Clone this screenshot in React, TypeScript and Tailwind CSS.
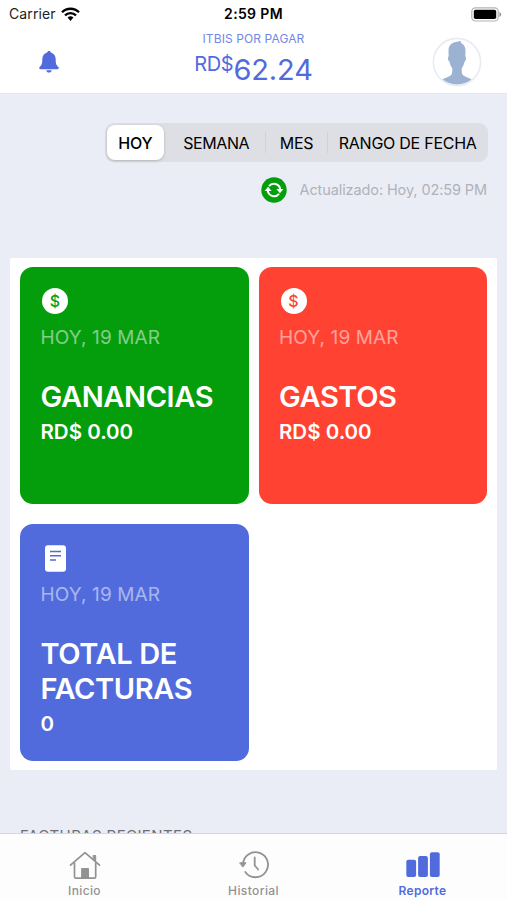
import React from "react";
import clsx from "clsx";

const tabs = [
  { label: "HOY", className: "w-[57px] tracking-[-0.2px]", active: true },
  { label: "SEMANA", className: "w-[101px] pl-1 tracking-[-0.4px]" },
  { label: "MES", className: "w-[63px] pl-px tracking-[-0.3px]", divider: true },
  { label: "RANGO DE FECHA", className: "w-[159px] pl-[2px] tracking-[-0.25px]", divider: true },
];

const cards = [
  { title: "GANANCIAS", value: "RD$ 0.00", color: "bg-[#049d0c]", text: "text-[#049d0c]", icon: "money" },
  { title: "GASTOS", value: "RD$ 0.00", color: "bg-[#ff4232]", text: "text-[#ff4232]", icon: "money" },
  { title: "TOTAL DE FACTURAS", value: "0", color: "bg-[#516bdd]", text: "text-[#516bdd]", icon: "invoice" },
];

const WifiIcon = () => (
  <svg width="19" height="15" viewBox="0 0 19 15" fill="none" stroke="#000" strokeWidth="2.3">
    <path d="M1 5.3a12 12 0 0 1 17 0" />
    <path d="M4 8.4a7.8 7.8 0 0 1 11 0" />
    <path d="M6.6 10.6a4.1 4.1 0 0 1 5.8 0L9.5 13.9z" fill="#000" stroke="none" />
  </svg>
);

const BatteryIcon = () => (
  <svg width="31" height="15" viewBox="0 0 31 15">
    <rect x="0.8" y="0.8" width="26.4" height="13.2" rx="3.6" fill="#fff" stroke="#b3b3b3" strokeWidth="1.2" />
    <rect x="2.8" y="2.8" width="22.4" height="9.2" rx="1.8" fill="#000" />
    <path d="M28.4 5c2.4.8 2.4 4 0 4.8z" fill="#999" />
  </svg>
);

const BellIcon = () => (
  <svg width="20" height="22" viewBox="0 0 20 22" fill="#516bdd">
    <path d="M10 0c-1 0-1.7.6-1.9 1.5C5 2.3 3.3 5 3.3 8.3c0 4.300-.6 5.900-2.500 7.500-1 1-.6 2.400.8 2.400h16.800c1.400 0 1.800-1.400.8-2.400-1.900-1.600-2.500-3.200-2.500-7.500 0-3.300-1.700-6-4.800-6.800C11.700.6 11 0 10 0z" />
    <path d="M7.300 19.200h5.400c-.2 1.500-1.300 2.400-2.700 2.400s-2.500-.9-2.700-2.400z" />
  </svg>
);

const Avatar = () => (
  <svg width="50" height="50" viewBox="0 0 50 50">
    <defs>
      <clipPath id="avatar">
        <circle cx="25" cy="25" r="22.500" />
      </clipPath>
    </defs>
    <circle cx="25" cy="25" r="23.600" fill="#fff" stroke="#e9ebf4" strokeWidth="1.600" />
    <path
      clipPath="url(#avatar)"
      fill="#9cb2d2"
      d="M28.500 4c-1.500.2-3 .9-4.500 1.100-5 .7-7.700 4.200-7.500 9.200l.2 5.200c-1.200.3-.8 4.500.8 5.200.5 2.500 1.300 4.500 2.700 6.300.2 2.500.2 5-.7 6.500C17.500 40.500 11 41 7 44v6h36v-6c-4-3-10.500-3.500-12.500-6.500-.9-1.500-.9-4-.7-6.500 1.400-1.800 2.200-3.800 2.700-6.300 1.600-.7 2-4.900.8-5.200l.2-5.200c.1-3.500-1-6.500-4.200-8z"
    />
  </svg>
);

const RefreshIcon = () => (
  <svg width="26" height="26" viewBox="0 0 26 26">
    <circle cx="13" cy="13" r="12.700" fill="#049d0c" />
    <g fill="none" stroke="#fff" strokeWidth="2">
      <path d="M8 9.200a6.300 6.300 0 0 1 11.200 3.300" />
      <path d="M18 16.800a6.300 6.300 0 0 1-11.200-3.300" />
    </g>
    <path d="M15.400 12h7l-3.500 4.200z" fill="#fff" />
    <path d="M3.600 14h7L7.100 9.800z" fill="#fff" />
  </svg>
);

const InvoiceIcon = () => (
  <svg width="27" height="27" viewBox="0 0 27 27">
    <rect x="4" y="0.300" width="21" height="26.400" rx="3" fill="#fff" />
    <path d="M9 6.500h11M9 10.700h11M9 15h6" stroke="#516bdd" strokeWidth="1.600" />
  </svg>
);

const HomeIcon = () => (
  <svg width="32" height="30" viewBox="0 0 32 30" fill="none" stroke="#929292" strokeWidth="1.700" strokeLinecap="round" strokeLinejoin="round">
    <path d="M1.500 14.200 16 1.700l14.500 12.500" />
    <path d="M5.500 12v13.700q0 1.500 1.500 1.500h18.200q1.500 0 1.500-1.500V12" />
    <path d="M24.500 4.500h2.200v5.500l-2.200-1.900z" fill="#929292" strokeWidth="1" />
    <path d="M13 17.500h6.500v9.700H13z" fill="#929292" strokeWidth="1" />
  </svg>
);

const HistoryIcon = () => (
  <svg width="30" height="30" viewBox="0 0 30 30" fill="none" stroke="#929292" strokeWidth="1.800" strokeLinecap="round" strokeLinejoin="round">
    <path d="M4 14.500A12.500 12.500 0 1 1 6.300 22" />
    <path d="M1 12.800h6l-3 4z" fill="#929292" strokeWidth="1" />
    <path d="M15.700 7.500v8l3.500 4" />
  </svg>
);

const ReportIcon = () => (
  <svg width="34" height="26" viewBox="0 0 34 26" fill="#516bdd">
    <rect x="0.300" y="7.700" width="9.800" height="17.300" rx="2" />
    <rect x="12.100" y="4" width="9.800" height="21" rx="2" />
    <rect x="23.900" y="0.300" width="9.800" height="24.700" rx="2" />
  </svg>
);

const App = () => {
  return (
    <div className="flex h-[900px] w-[507px] flex-col overflow-hidden bg-[#eaedf6] font-['Inter',sans-serif]">
      <header className="h-[94px] shrink-0 border-b border-[#e6e8f0] bg-white">
        <div className="grid h-7 grid-cols-[1fr_auto_1fr] items-center text-sm leading-7 text-black">
          <div className="flex items-center gap-[5px] pl-[9px] text-[#222]">
            <span className="tracking-[0.1px]">Carrier</span>
            <WifiIcon />
          </div>
          <span className="text-center font-semibold tracking-[0.35px]">2:59 PM</span>
          <div className="flex justify-end pr-[5px]">
            <BatteryIcon />
          </div>
        </div>
        <div className="grid grid-cols-[1fr_auto_1fr] text-[#516bdd]">
          <div className="pt-[23px] pl-[39px]">
            <BellIcon />
          </div>
          <div className="flex flex-col items-center">
            <span className="pt-[3px] text-xs leading-4 tracking-[0.1px] text-[#7187e5]">ITBIS POR PAGAR</span>
            <div className="flex items-start">
              <span className="pt-[5px] text-[20px] leading-6 tracking-[-0.3px]">RD$</span>
              <span className="pt-[5px] text-[29px] leading-9 tracking-[-0.1px]">62.24</span>
            </div>
          </div>
          <div className="flex justify-end pt-[9px] pr-[25px]">
            <Avatar />
          </div>
        </div>
      </header>

      <main className="min-h-0 flex-1 overflow-hidden">
        <div className="mt-[29px] ml-[105px] flex h-[39px] w-[383px] items-center rounded-[9px] bg-[#dddfe4] px-[2px]">
          {tabs.map((tab) => (
            <div
              key={tab.label}
              className={clsx(
                "relative flex h-[35px] items-center justify-center text-base whitespace-nowrap text-black",
                tab.className,
                tab.active && "rounded-[8px] bg-white font-medium shadow-[0_1px_3px_rgba(0,0,0,0.2)]"
              )}
            >
              {tab.divider && <span className="absolute left-0 h-[21px] w-px bg-[#cfd1d7]" />}
              {tab.label}
            </div>
          ))}
        </div>

        <div className="mt-[15px] mr-5 flex items-center justify-end gap-3">
          <RefreshIcon />
          <span className="text-[14.5px] leading-6 tracking-[-0.1px] text-[#b0b2b9]">Actualizado: Hoy, 02:59 PM</span>
        </div>

        <section className="mx-[10px] mt-[55px] grid h-[512px] grid-cols-2 content-start gap-x-[10px] gap-y-5 rounded-[2px] bg-white px-[10px] pt-[9px]">
          {cards.map((card) => (
            <div key={card.title} className={clsx("h-[237px] rounded-[13px] px-[20.5px] pt-[21px] text-white", card.color)}>
              <div className="h-[27px]">
                {card.icon === "money" ? (
                  <div className={clsx("ml-[1.5px] flex size-[26px] items-center justify-center rounded-full bg-white text-base font-medium", card.text)}>
                    $
                  </div>
                ) : (
                  <InvoiceIcon />
                )}
              </div>
              <p className="mt-[11px] h-6 text-[19px] leading-6 tracking-[0.1px] opacity-50">HOY, 19 MAR</p>
              <h2 className="mt-[29px] text-[29px] leading-[35px] font-semibold tracking-[-0.4px]">{card.title}</h2>
              <p className="text-[20.5px] leading-[35px] font-semibold">{card.value}</p>
            </div>
          ))}
        </section>

        <h3 className="mt-[54px] ml-5 text-[15px] leading-6 tracking-[0.4px] text-[#6d6f76]">FACTURAS RECIENTES</h3>
      </main>

      <nav className="grid h-[67px] shrink-0 grid-cols-3 border-t border-[#d5d6da] bg-[#fdfdfd] text-xs leading-4 font-medium text-[#929292]">
        <div className="flex flex-col items-center">
          <div className="flex h-[49px] items-center pt-[15px]">
            <HomeIcon />
          </div>
          <span className="tracking-[0.35px]">Inicio</span>
        </div>
        <div className="flex flex-col items-center">
          <div className="flex h-[49px] items-center pt-[13px]">
            <HistoryIcon />
          </div>
          <span className="tracking-[0.4px]">Historial</span>
        </div>
        <div className="flex flex-col items-center text-[#516bdd]">
          <div className="flex h-[49px] items-center pt-[13px]">
            <ReportIcon />
          </div>
          <span className="font-semibold tracking-[0.3px]">Reporte</span>
        </div>
      </nav>
    </div>
  );
};

export default App;
